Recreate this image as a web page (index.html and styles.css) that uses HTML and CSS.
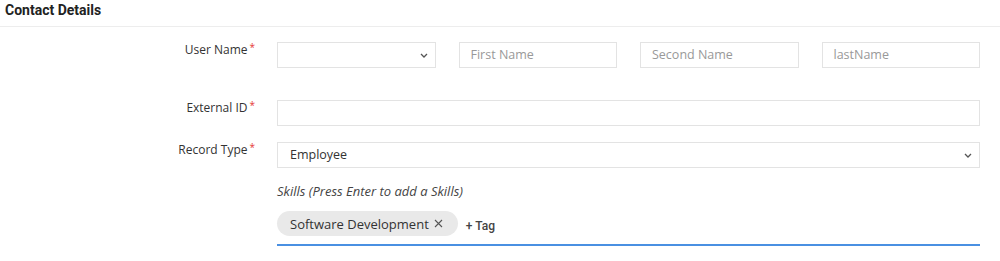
FILE: index.html
```html
<!DOCTYPE html>
<html lang="en">
<head>
    <meta charset="UTF-8">
    <title>Contact Details</title>
    <link rel="stylesheet" href="styles.css">
</head>
<body>

<div class="section-title">Contact Details</div>

<div class="form">
    <div class="row row-first">
        <label class="label">User Name<span class="req">*</span></label>
        <div class="fields four">
            <div class="select"><span></span><svg width="8" height="5" viewBox="0 0 8 5"><path d="M1 1l3 3 3-3" fill="none" stroke="#555" stroke-width="1.3"/></svg></div>
            <div class="input placeholder">First Name</div>
            <div class="input placeholder">Second Name</div>
            <div class="input placeholder">lastName</div>
        </div>
    </div>

    <div class="row">
        <label class="label">External ID<span class="req">*</span></label>
        <div class="fields">
            <div class="input"></div>
        </div>
    </div>

    <div class="row">
        <label class="label">Record Type<span class="req">*</span></label>
        <div class="fields">
            <div class="select"><span>Employee</span><svg width="8" height="5" viewBox="0 0 8 5"><path d="M1 1l3 3 3-3" fill="none" stroke="#555" stroke-width="1.3"/></svg></div>
        </div>
    </div>

    <div class="row">
        <div class="label"></div>
        <div class="fields">
            <div class="hint">Skills (Press Enter to add a Skills)</div>
            <div class="tags">
                <span class="chip">Software Development <svg class="x" width="9" height="9" viewBox="0 0 9 9"><path d="M1 1l7 7M8 1l-7 7" stroke="#555" stroke-width="1.1"/></svg></span>
                <span class="add-tag">+ Tag</span>
            </div>
        </div>
    </div>
</div>

</body>
</html>
```

FILE: styles.css
```css
body {
    margin: 0;
    font-family: 'Open Sans', sans-serif;
    color: #333;
    background: #fff;
}
.section-title {
    font-family: 'Roboto', sans-serif;
    font-weight: bold;
    font-size: 14px;
    height: 26px;
    line-height: 21px;
    padding: 0 5px;
    border-bottom: 1px solid #ededed;
    color: #222;
}
.form {
    padding-top: 15px;
}
.row {
    display: grid;
    grid-template-columns: 255px 703px;
    column-gap: 22px;
    margin-bottom: 16px;
}
.row-first {
    margin-bottom: 32px;
}
.label {
    text-align: right;
    font-size: 12px;
    line-height: 16px;
    color: #333;
}
.req {
    color: #e53935;
    margin-left: 2px;
    position: relative;
    top: -3px;
    font-size: 10px;
}
.fields.four {
    display: grid;
    grid-template-columns: repeat(4, 1fr);
    column-gap: 23px;
}
.input, .select {
    height: 26px;
    box-sizing: border-box;
    border: 1px solid #e3e3e3;
    font-size: 12.5px;
    line-height: 24px;
    padding: 0 12px;
}
.placeholder {
    color: #999;
    padding: 0 11px;
}
.select {
    display: flex;
    justify-content: space-between;
    align-items: center;
    padding-right: 7px;
}
.hint {
    font-style: italic;
    font-size: 13px;
    line-height: 14px;
    color: #444;
}
.tags {
    display: flex;
    align-items: center;
    margin-top: 13px;
    padding-bottom: 8px;
    border-bottom: 2px solid #4a90e2;
}
.chip {
    display: flex;
    align-items: center;
    background: #e9e9e9;
    border-radius: 13px;
    height: 25px;
    padding: 0 15px 0 13px;
    font-size: 13px;
    color: #333;
}
.x {
    margin-left: 5px;
}
.add-tag {
    font-family: 'Roboto', sans-serif;
    font-size: 12px;
    font-weight: 500;
    margin-left: 8px;
    margin-top: 4px;
    color: #444;
}
```
